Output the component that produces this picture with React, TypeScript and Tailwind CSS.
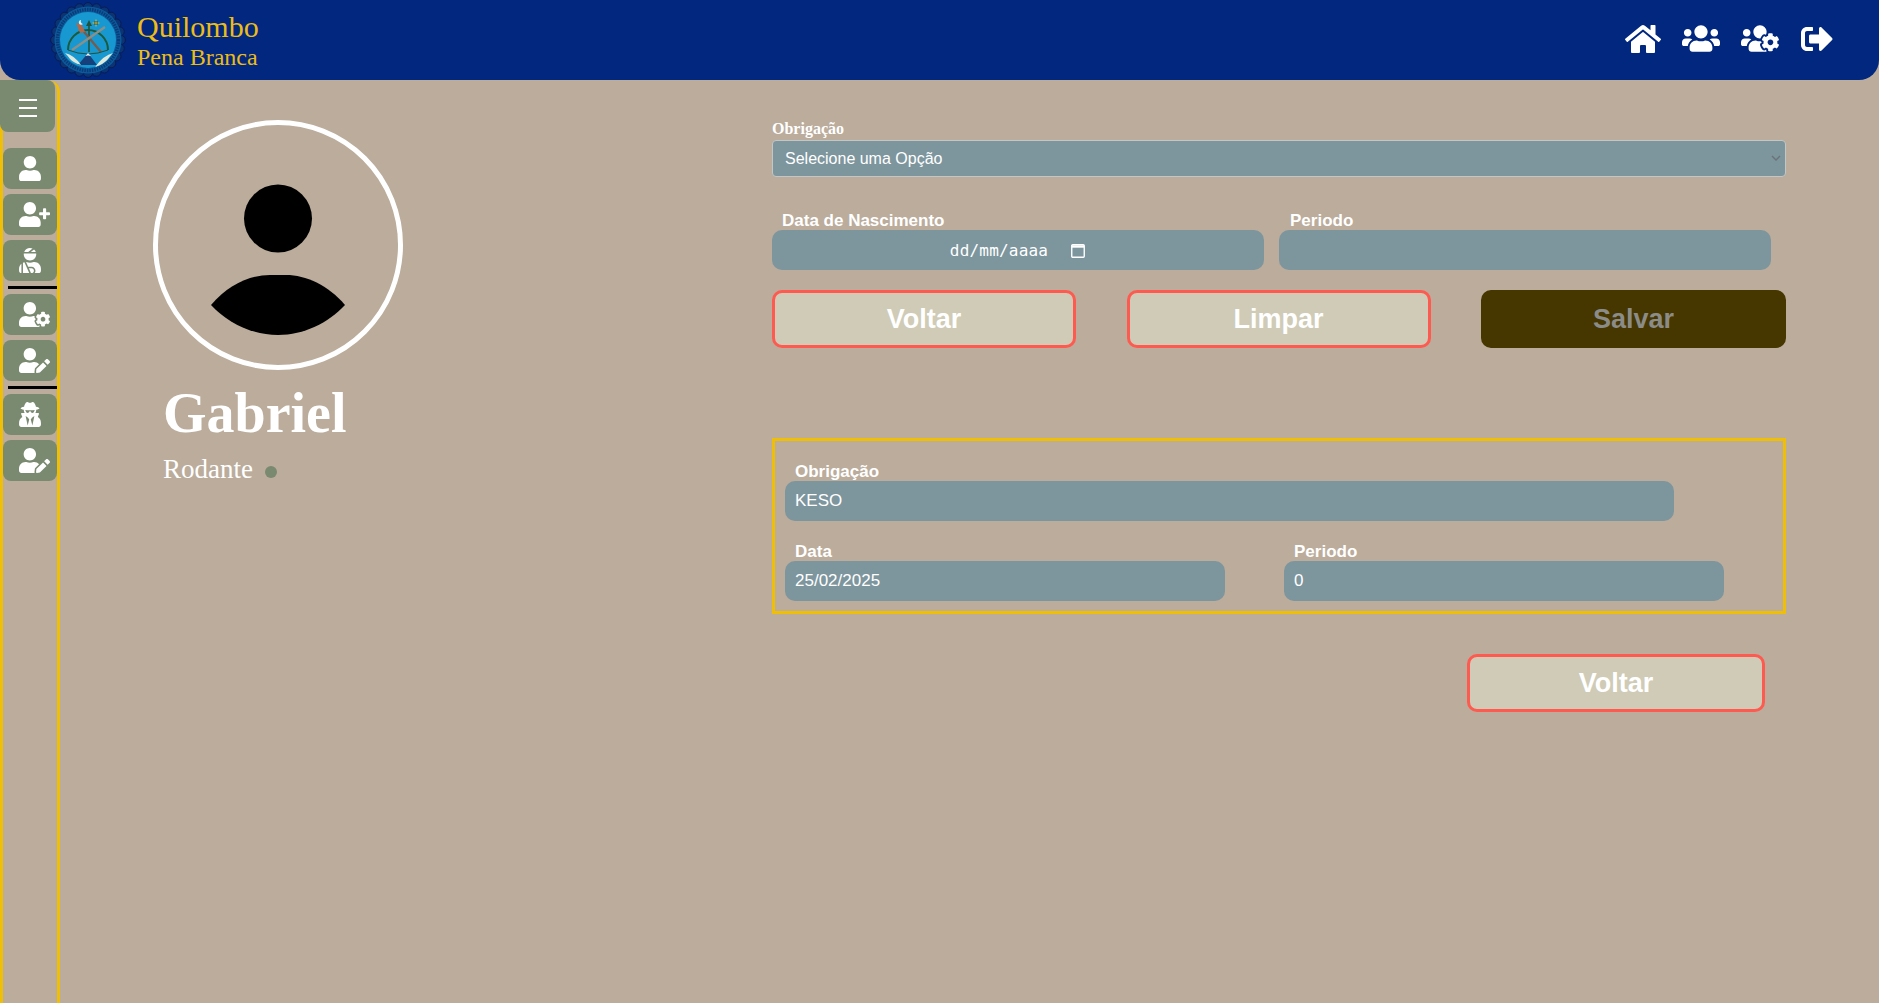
import React from "react";
import {
  FaHome,
  FaUsers,
  FaUsersCog,
  FaSignOutAlt,
  FaUser,
  FaUserPlus,
  FaUserInjured,
  FaUserCog,
  FaUserEdit,
  FaUserSecret,
} from "react-icons/fa";

function Emblem() {
  const scallops = Array.from({ length: 24 }, (_, i) => (i * Math.PI * 2) / 24);
  return (
    <svg width="76" height="76" viewBox="0 0 76 76" className="shrink-0">
      {scallops.map((a, i) => (
        <circle key={i} cx={38 + 32.8 * Math.cos(a)} cy={38 + 32.8 * Math.sin(a)} r="4.6" fill="#0a3474" stroke="#0a1c54" strokeWidth="1" />
      ))}
      <circle cx="38" cy="38" r="33.5" fill="#0b5c9c" />
      <circle cx="38" cy="38" r="30.5" fill="none" stroke="#0c3a78" strokeWidth="3.4" strokeDasharray="1.5 1" />
      <circle cx="38" cy="38" r="28" fill="#1798d0" />
      <path d="M18 48 A20 20 0 0 1 58 48" fill="none" stroke="#1d5a3a" strokeWidth="2" />
      <path d="M39 20 V50" stroke="#23523a" strokeWidth="1.6" />
      <path d="M36 24 L39 18 L42 24 Z" fill="#23523a" />
      <path d="M30 25 L51 50" stroke="#7a5a48" strokeWidth="2.2" />
      <path d="M26 21 L32 23 L35 30 L30 31 Z" fill="#b06a4a" />
      <path d="M55 25 L22 48" stroke="#8d8f86" strokeWidth="2.2" />
      <path d="M18 48 Q38 56 58 48" fill="none" stroke="#23523a" strokeWidth="1" />
      <circle cx="46" cy="21" r="2" fill="#1b2a20" />
      <path d="M46 17.5 V24.5 M42.5 21 H49.5" stroke="#e8d24a" strokeWidth="0.8" />
      <path d="M31 18 a2.4 2.4 0 1 0 2 4 a2.8 2.8 0 0 1 -2 -4" fill="#e6f2f5" />
      <path d="M28 63 L38 51 L47 63 Z" fill="#15407c" />
      <path d="M35.5 54 L38 51 L41 54 L38 53.5 Z" fill="#eef4f6" />
      <path d="M15 51 Q24 53 31 63 Q24 61 20 57 Q18 54 15 51Z" fill="#dfe8dc" />
      <path d="M63 51 Q54 53 45 65 Q54 62 58 57 Q60 54 63 51Z" fill="#dfe8dc" />
    </svg>
  );
}

function Field({ label, value, className, labelClass }: { label: string; value: string; className: string; labelClass?: string }) {
  return (
    <div className={className}>
      <label className={`block h-[20px] pl-[10px] text-[17px] leading-[22px] font-bold text-white ${labelClass ?? ""}`}>{label}</label>
      <input
        readOnly
        defaultValue={value}
        className="block h-[40px] w-full rounded-[10px] bg-[#7d959d] px-[10px] text-[17px] text-white outline-none"
      />
    </div>
  );
}

function SideButton({ children }: { children: React.ReactNode }) {
  return (
    <button className="flex h-[41px] w-[54px] items-center rounded-lg bg-[#7a8a70] pl-[16px] text-white">
      {children}
    </button>
  );
}

function ActionButton({ label, className }: { label: string; className: string }) {
  return (
    <button className={`h-[58px] rounded-[10px] border-[3px] border-[#ff5a4f] bg-[#cfcbb6] text-[27px] font-bold text-white ${className}`}>
      {label}
    </button>
  );
}

export default function App() {
  return (
    <div className="flex h-[1003px] flex-col overflow-hidden bg-[#bbac9b] font-['Liberation_Sans',Arial,sans-serif]">
      <header className="flex h-[80px] shrink-0 items-center rounded-b-[20px] bg-[#01277f] pl-[50px] pr-[46px]">
        <Emblem />
        <div className="mb-[2px] ml-[11px] font-['Liberation_Serif',serif] text-[#ecbc17]">
          <div className="text-[30px] leading-[35px]">Quilombo</div>
          <div className="text-[24px] leading-[26px]">Pena Branca</div>
        </div>
        <nav className="mb-[3px] ml-auto flex items-center gap-[21px] text-white">
          <FaHome className="h-[32px] w-[36px]" />
          <FaUsers className="h-[31px] w-[38px]" />
          <FaUsersCog className="h-[31px] w-[38px]" />
          <FaSignOutAlt className="ml-[1px] h-[32px] w-[32px]" />
        </nav>
      </header>

      <div className="flex flex-1">
        <aside className="flex w-[60px] shrink-0 flex-col gap-[5px] rounded-tr-xl border-x-[3px] border-[#efbe07]">
          <button className="mb-[11px] ml-[-3px] flex h-[52px] w-[55px] items-center justify-center rounded-tr-lg rounded-b-lg bg-[#7a8a70] pt-[4px]">
            <svg width="20" height="18" viewBox="0 0 20 18" fill="none" stroke="white" strokeWidth="2">
              <path d="M1 1 H19 M1 9 H19 M1 17 H19" />
            </svg>
          </button>
          <SideButton><FaUser className="h-[25px] w-[22px]" /></SideButton>
          <SideButton><FaUserPlus className="h-[25px] w-[31px]" /></SideButton>
          <SideButton><FaUserInjured className="h-[25px] w-[22px]" /></SideButton>
          <div className="ml-[5px] h-[3px] w-[49px] bg-black" />
          <SideButton><FaUserCog className="h-[25px] w-[31px]" /></SideButton>
          <SideButton><FaUserEdit className="h-[25px] w-[31px]" /></SideButton>
          <div className="ml-[5px] h-[3px] w-[49px] bg-black" />
          <SideButton><FaUserSecret className="h-[25px] w-[22px]" /></SideButton>
          <SideButton><FaUserEdit className="h-[25px] w-[31px]" /></SideButton>
        </aside>

        <main className="flex flex-1 justify-between pl-[93px] pr-[93px] pt-[40px]">
          <section className="font-['Liberation_Serif',serif] text-white">
            <div className="h-[250px] w-[250px] rounded-full border-[5px] border-white">
              <svg width="240" height="240" viewBox="0 0 240 240">
                <circle cx="120" cy="93.5" r="34" fill="black" />
                <path d="M53 180 C70 160 92 150 112 150 H128 C148 150 170 160 187 180 C170 198 146 210 120 210 C94 210 70 198 53 180Z" fill="black" />
              </svg>
            </div>
            <h1 className="ml-[10px] mt-[13px] text-[56px] font-bold leading-[60px]">Gabriel</h1>
            <div className="ml-[10px] mt-[10px] flex items-center text-[27px] leading-[32px]">
              Rodante
              <span className="ml-[12px] mt-[5px] h-[12px] w-[12px] rounded-full bg-[#7a8a70]" />
            </div>
          </section>

          <section className="w-[1014px]">
            <label className="block h-[20px] font-['Liberation_Serif',serif] text-[16px] font-bold leading-[18px] text-white">Obrigação</label>
            <div className="relative">
              <select className="block h-[37px] w-full appearance-none rounded-[4px] border border-[#c4c6c6] bg-[#7d959d] px-[12px] text-[16px] text-white outline-none">
                <option>Selecione uma Opção</option>
              </select>
              <svg className="absolute right-[5px] top-[15px]" width="10" height="7" viewBox="0 0 10 7" fill="none" stroke="#6b7378" strokeWidth="1.4">
                <path d="M1 1 L5 5 L9 1" />
              </svg>
            </div>

            <div className="mt-[33px] flex gap-[15px]">
              <div className="w-[492px]">
                <label className="block h-[20px] pl-[10px] text-[17px] font-bold leading-[22px] text-white">Data de Nascimento</label>
                <div className="flex h-[40px] items-center justify-center gap-[23px] rounded-[10px] bg-[#7d959d] pr-[1px] text-white">
                  <span className="pt-[1px] font-['DejaVu_Sans_Mono',monospace] text-[16px] tracking-[0.2px]">dd/mm/aaaa</span>
                  <svg width="14" height="15" viewBox="0 0 14 15" fill="none" stroke="white">
                    <rect x="0.75" y="1.75" width="12.5" height="12.5" rx="1" strokeWidth="1.4" />
                    <path d="M1 3.5 H13" strokeWidth="2.4" />
                  </svg>
                </div>
              </div>
              <Field label="Periodo" value="" className="w-[492px]" labelClass="pl-[11px]" />
            </div>

            <div className="mt-[20px] flex justify-between">
              <ActionButton label="Voltar" className="w-[304px]" />
              <ActionButton label="Limpar" className="w-[304px]" />
              <button className="h-[58px] w-[305px] rounded-[10px] bg-[#463600] text-[27px] font-bold text-[#8b8b88]">Salvar</button>
            </div>

            <div className="mt-[90px] h-[176px] border-[3px] border-[#efbe07] pl-[10px] pt-[20px]">
              <Field label="Obrigação" value="KESO" className="w-[889px]" />
              <div className="mt-[20px] flex">
                <Field label="Data" value="25/02/2025" className="w-[440px]" />
                <Field label="Periodo" value="0" className="ml-[59px] w-[440px]" />
              </div>
            </div>

            <div className="mt-[40px] flex justify-end pr-[21px]">
              <ActionButton label="Voltar" className="w-[298px]" />
            </div>
          </section>
        </main>
      </div>
    </div>
  );
}
